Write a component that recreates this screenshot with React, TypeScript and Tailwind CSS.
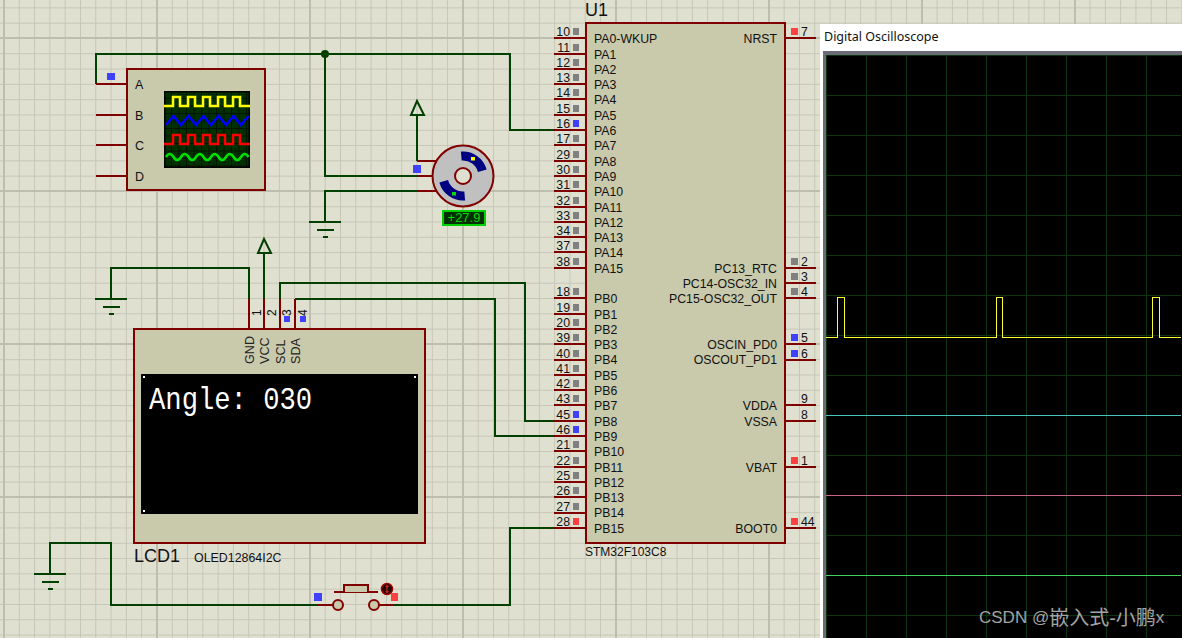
const MAROON = "#800000";
const WIRE = "#004000";
const BLUE_MARK = "#4040ff";

type Pin = { num: string; name: string; mark?: "grey" | "blue" | "red" } | null;

const markColors = {
  grey: "bg-[#808080]",
  blue: "bg-[#4040ff]",
  red: "bg-[#ff4040]",
};

// rows are one grid step apart, null leaves the row empty
const leftPins: Pin[] = [
  { num: "10", name: "PA0-WKUP", mark: "grey" },
  { num: "11", name: "PA1", mark: "grey" },
  { num: "12", name: "PA2", mark: "grey" },
  { num: "13", name: "PA3", mark: "grey" },
  { num: "14", name: "PA4", mark: "grey" },
  { num: "15", name: "PA5", mark: "grey" },
  { num: "16", name: "PA6", mark: "blue" },
  { num: "17", name: "PA7", mark: "grey" },
  { num: "29", name: "PA8", mark: "grey" },
  { num: "30", name: "PA9", mark: "grey" },
  { num: "31", name: "PA10", mark: "grey" },
  { num: "32", name: "PA11", mark: "grey" },
  { num: "33", name: "PA12", mark: "grey" },
  { num: "34", name: "PA13", mark: "grey" },
  { num: "37", name: "PA14", mark: "grey" },
  { num: "38", name: "PA15", mark: "grey" },
  null,
  { num: "18", name: "PB0", mark: "grey" },
  { num: "19", name: "PB1", mark: "grey" },
  { num: "20", name: "PB2", mark: "grey" },
  { num: "39", name: "PB3", mark: "grey" },
  { num: "40", name: "PB4", mark: "grey" },
  { num: "41", name: "PB5", mark: "grey" },
  { num: "42", name: "PB6", mark: "grey" },
  { num: "43", name: "PB7", mark: "grey" },
  { num: "45", name: "PB8", mark: "blue" },
  { num: "46", name: "PB9", mark: "blue" },
  { num: "21", name: "PB10", mark: "grey" },
  { num: "22", name: "PB11", mark: "grey" },
  { num: "25", name: "PB12", mark: "grey" },
  { num: "26", name: "PB13", mark: "grey" },
  { num: "27", name: "PB14", mark: "grey" },
  { num: "28", name: "PB15", mark: "red" },
];

const rightRows: Record<number, Pin> = {
  0: { num: "7", name: "NRST", mark: "red" },
  15: { num: "2", name: "PC13_RTC", mark: "grey" },
  16: { num: "3", name: "PC14-OSC32_IN", mark: "grey" },
  17: { num: "4", name: "PC15-OSC32_OUT", mark: "grey" },
  20: { num: "5", name: "OSCIN_PD0", mark: "blue" },
  21: { num: "6", name: "OSCOUT_PD1", mark: "blue" },
  24: { num: "9", name: "VDDA" },
  25: { num: "8", name: "VSSA" },
  28: { num: "1", name: "VBAT", mark: "red" },
  32: { num: "44", name: "BOOT0", mark: "red" },
};
const rightPins: Pin[] = leftPins.map((_, i) => rightRows[i] ?? null);

function Mcu() {
  return (
    <div className="absolute left-[554px] top-0 flex flex-col text-[#111]">
      <div className="h-[22px] pl-[31px] text-[18px] leading-[21px]">U1</div>
      <div className="flex text-[12.3px] leading-[10px]">
        <div className="w-[31px] pt-[2px]">
          {leftPins.map((pin, i) =>
            pin ? (
              <div key={i} className="flex h-[15.3px] items-end justify-end gap-[3px] border-b-2 border-[#800000] pr-[6px]">
                <span>{pin.num}</span>
                <span className={`mb-[2px] h-[7px] w-[6px] ${markColors[pin.mark ?? "grey"]}`} />
              </div>
            ) : (
              <div key={i} className="h-[15.3px]" />
            ),
          )}
        </div>
        <div className="flex h-[522px] w-[201px] justify-between border-2 border-[#800000] bg-[#c9c9ac] pl-[7px] pr-[7px] pt-[7.6px]">
          <div>
            {leftPins.map((pin, i) => (
              <div key={i} className="flex h-[15.3px] items-center">
                {pin?.name}
              </div>
            ))}
          </div>
          <div>
            {rightPins.map((pin, i) => (
              <div key={i} className="flex h-[15.3px] items-center justify-end">
                {pin?.name}
              </div>
            ))}
          </div>
        </div>
        <div className="w-[30px] pt-[2px]">
          {rightPins.map((pin, i) =>
            pin ? (
              <div key={i} className="flex h-[15.3px] items-end gap-[3px] border-b-2 border-[#800000] pl-[5px]">
                <span className={`mb-[2px] h-[7px] w-[7px] ${pin.mark ? markColors[pin.mark] : ""}`} />
                <span>{pin.num}</span>
              </div>
            ) : (
              <div key={i} className="h-[15.3px]" />
            ),
          )}
        </div>
      </div>
      <div className="mt-[1px] pl-[31px] text-[12px] leading-[14px]">STM32F103C8</div>
    </div>
  );
}

const squareWave = (low: number, high: number) => {
  let d = `M0 ${low}`;
  for (const x of [9, 24, 39, 54, 69]) {
    d += ` H${x} V${high} H${x + 7} V${low}`;
  }
  return d + " H86";
};

const zigzag = () => {
  let d = "M2 34";
  for (let x = 9.5, up = true; x < 86; x += 7.5, up = !up) {
    d += ` L${x} ${up ? 25 : 34}`;
  }
  return d;
};

const sineWave = () => {
  let d = "M2 66 q3.75 -6 7.5 0";
  for (let i = 0; i < 10; i++) d += " t7.5 0";
  return d;
};

function ScopeSymbol() {
  return (
    <div className="absolute left-[126px] top-[68px] flex h-[123px] w-[140px] border-2 border-[#800000] bg-[#c9c9ac] pl-[7px]">
      <div className="flex w-[29px] flex-col pt-[8px] text-[12.5px] leading-[14px] text-[#111]">
        <span>A</span>
        <span className="mt-[17px]">B</span>
        <span className="mt-[16px]">C</span>
        <span className="mt-[17px]">D</span>
      </div>
      <svg width="86" height="77" className="mt-[21px] bg-[#003000]">
        {Array.from({ length: 12 }, (_, i) => (
          <line key={i} x1={i * 7.5} x2={i * 7.5} y1="0" y2="77" stroke="#001400" />
        ))}
        {Array.from({ length: 11 }, (_, i) => (
          <line key={i} y1={i * 7.5} y2={i * 7.5} x1="0" x2="86" stroke="#001400" />
        ))}
        <rect x="0.5" y="0.5" width="85" height="76" fill="none" stroke="#000" strokeWidth="2" />
        <path d={squareWave(15, 6)} fill="none" stroke="#ffff00" strokeWidth="2.6" />
        <path d={zigzag()} fill="none" stroke="#0000ff" strokeWidth="2.6" />
        <path d={squareWave(53, 44)} fill="none" stroke="#ff0000" strokeWidth="2.6" />
        <path d={sineWave()} fill="none" stroke="#00e000" strokeWidth="2.6" />
      </svg>
    </div>
  );
}

function Lcd() {
  return (
    <div className="absolute left-[133px] top-[296px] flex w-[293px] flex-col text-[#111]">
      {/* pin numbers above the body */}
      <div className="flex h-[32px] pl-[116px] pt-[9px]">
        {["1", "2", "3", "4"].map((num) => (
          <div key={num} className="flex w-[15.3px] flex-col items-center">
            <span className="h-[11px] rotate-180 text-[12px] leading-[12px] [writing-mode:vertical-rl]">{num}</span>
            {(num === "3" || num === "4") && <span className="h-[6px] w-[6px] bg-[#4040ff]" />}
          </div>
        ))}
      </div>
      <div className="h-[216px] border-2 border-[#800000] bg-[#c9c9ac] px-[6px]">
        <div className="flex h-[34px] pl-[102px] pt-[7px] text-[12.6px] leading-[15px] text-[#222]">
          {["GND", "VCC", "SCL", "SDA"].map((name) => (
            <span key={name} className="h-[27px] w-[15.3px] rotate-180 [writing-mode:vertical-rl]">
              {name}
            </span>
          ))}
        </div>
        <div className="relative mt-[10px] h-[140px] w-[277px] bg-black pl-[8px] pt-[13px]">
          <span className="absolute left-[2px] top-[2px] h-[2px] w-[2px] bg-white" />
          <span className="absolute right-[2px] top-[2px] h-[2px] w-[2px] bg-white" />
          <span className="absolute bottom-[2px] left-[2px] h-[2px] w-[2px] bg-white" />
          <span className="block origin-top-left scale-y-115 font-['Liberation_Mono',monospace] text-[27.2px] leading-[24px] text-white">
            Angle: 030
          </span>
        </div>
      </div>
      <div className="flex items-baseline gap-[14px] pl-[1px] pt-[2px]">
        <span className="text-[18px] leading-[21px]">LCD1</span>
        <span className="text-[12.4px] leading-[14px]">OLED12864I2C</span>
      </div>
    </div>
  );
}

function Motor() {
  return (
    <div className="absolute left-[430px] top-[143px] flex w-[66px] flex-col items-center">
      <svg width="66" height="66">
        <circle cx="33" cy="33" r="30.5" fill="#c0c0c0" stroke={MAROON} strokeWidth="2" />
        <circle cx="33" cy="33" r="8" fill="#dfe0d0" stroke={MAROON} strokeWidth="2" />
        <path d="M31.3 13.1 A20 20 0 0 1 52.3 27.8" fill="none" stroke="#000080" strokeWidth="9" />
        <path d="M34.7 52.9 A20 20 0 0 1 13.7 38.2" fill="none" stroke="#000080" strokeWidth="9" />
        <rect x="41" y="14" width="4" height="3.5" fill="#ffff00" />
        <rect x="22" y="49" width="4" height="3.5" fill="#00e000" />
      </svg>
      <div className="ml-[2px] mt-[1px] flex h-[16px] w-[44px] items-center justify-center border-2 border-[#00d000] bg-[#003000] text-[13px] text-[#00d800]">
        +27.9
      </div>
    </div>
  );
}

function PushButton() {
  return (
    <svg className="absolute left-[314px] top-[580px]" width="86" height="36">
      <line x1="3" x2="19" y1="25" y2="25" stroke={MAROON} strokeWidth="2" />
      <line x1="65" x2="79" y1="25" y2="25" stroke={MAROON} strokeWidth="2" />
      <circle cx="24" cy="25" r="5" fill="#c9c9ac" stroke={MAROON} strokeWidth="2" />
      <circle cx="60" cy="25" r="5" fill="#c9c9ac" stroke={MAROON} strokeWidth="2" />
      <line x1="20" x2="64" y1="12" y2="12" stroke={MAROON} strokeWidth="2" />
      <path d="M30 12 V5 H54 V12" fill="#c9c9ac" stroke={MAROON} strokeWidth="2" />
      <circle cx="73" cy="9" r="5.5" fill="#200000" stroke="#a00000" strokeWidth="1.5" />
      <path d="M73 5.5 V12.5 M71.5 7 L73 5.5 L74.5 7 M71.5 11 L73 12.5 L74.5 11" fill="none" stroke="#ff3030" />
      <rect x="0" y="13" width="8" height="8" fill={BLUE_MARK} />
      <rect x="77" y="13" width="7" height="8" fill="#ff4040" />
    </svg>
  );
}

// wires and terminals: polylines of page coordinates
const wires = [
  "M96 84 V54 H510 V130 H556",
  "M325 54 V176 H417",
  "M325 222 V191 H417",
  "M417 161 V115",
  "M249 299 V268 H111 V299",
  "M264 299 V253",
  "M280 299 V283 H525 V421 H556",
  "M295 299 H495 V436 H556",
  "M50 574 V543 H111 V605 H317",
  "M393 605 H510 V528 H556",
];

const grounds = [
  [325, 222],
  [111, 299],
  [50, 574],
];

const arrows = [
  [417, 115],
  [264, 253],
];

function Wiring() {
  return (
    <svg className="absolute left-0 top-0" width="1182" height="638">
      {wires.map((d) => (
        <path key={d} d={d} fill="none" stroke={WIRE} strokeWidth="2" />
      ))}
      <circle cx="325" cy="54" r="4" fill={WIRE} />
      {grounds.map(([x, y]) => (
        <g key={x} stroke={WIRE} strokeWidth="2">
          <line x1={x - 16} x2={x + 16} y1={y} y2={y} />
          <line x1={x - 8} x2={x + 9} y1={y + 8} y2={y + 8} />
          <line x1={x - 2} x2={x + 3} y1={y + 15} y2={y + 15} />
        </g>
      ))}
      {arrows.map(([x, y]) => (
        <path key={x} d={`M${x - 6} ${y} H${x + 7} L${x} ${y - 14} Z`} fill="none" stroke={WIRE} strokeWidth="2" />
      ))}
      {/* scope, motor and lcd leads */}
      <g stroke={MAROON} strokeWidth="2">
        <path d="M96 84 H127 M96 115 H127 M96 145 H127 M96 176 H127" />
        <path d="M417 161 H438 M417 176 H434 M417 191 H438" />
        <path d="M249 299 V329 M264 299 V329 M280 299 V329 M295 299 V329" />
      </g>
      <rect x="107" y="73" width="8" height="7" fill={BLUE_MARK} />
      <rect x="413" y="165" width="8" height="8" fill={BLUE_MARK} />
    </svg>
  );
}

function OscilloscopeWindow() {
  const traces = [
    [360, "#48c4c0"],
    [440, "#c86488"],
    [520, "#40d060"],
  ] as const;
  return (
    <div className="absolute bottom-0 left-[820px] right-0 top-[24px] flex flex-col bg-white pl-[3px]">
      <div className="flex h-[27px] items-center pl-[1px] font-['Noto_Sans',sans-serif] text-[12.5px] text-[#111]">
        Digital Oscilloscope
      </div>
      <div className="min-h-0 flex-1 border-l-[3px] border-t-[4px] border-[#6c6c78] bg-black">
        <svg width="355" height="583" shapeRendering="crispEdges">
          {Array.from({ length: 9 }, (_, i) => (
            <line key={i} x1={i * 40 + 0.5} x2={i * 40 + 0.5} y1="0" y2="583" stroke="#0c340c" />
          ))}
          {Array.from({ length: 15 }, (_, i) => (
            <line key={i} y1={i * 40 + 0.5} y2={i * 40 + 0.5} x1="0" x2="355" stroke="#0c340c" />
          ))}
          <path
            d="M0 282.5 H11.5 V242.5 H18.5 V282.5 H170.5 V242.5 H176.5 V282.5 H326.5 V242.5 H333.5 V282.5 H355"
            fill="none"
            stroke="#ffff30"
          />
          {traces.map(([y, color]) => (
            <line key={y} x1="0" x2="355" y1={y + 0.5} y2={y + 0.5} stroke={color} />
          ))}
        </svg>
      </div>
    </div>
  );
}

export default function App() {
  return (
    <div className="relative h-[638px] w-[1182px] overflow-hidden bg-[#e0e0d1] bg-[linear-gradient(to_right,#bebeb0_2px,transparent_2px),linear-gradient(to_bottom,#bebeb0_2px,transparent_2px),linear-gradient(to_right,#c6c6b8_1px,transparent_1px),linear-gradient(to_bottom,#c6c6b8_1px,transparent_1px)] font-['Liberation_Sans',sans-serif] [background-position:3px_37px,3px_37px,3.5px_7.4px,3.5px_7.4px] [background-size:153px_153px,153px_153px,15.3px_15.3px,15.3px_15.3px]">
      <Wiring />
      <ScopeSymbol />
      <Motor />
      <PushButton />
      <Lcd />
      <Mcu />
      <OscilloscopeWindow />

      {/* image watermark, sits over the scope */}
      <span className="absolute left-[979px] top-[606px] flex items-center font-['Liberation_Sans','Noto_Sans_CJK_SC',sans-serif] text-[17px] leading-[24px] text-[#a4a4a4]">
        CSDN @<span className="text-[20px]">嵌入式-小鹏</span>x
      </span>
    </div>
  );
}
